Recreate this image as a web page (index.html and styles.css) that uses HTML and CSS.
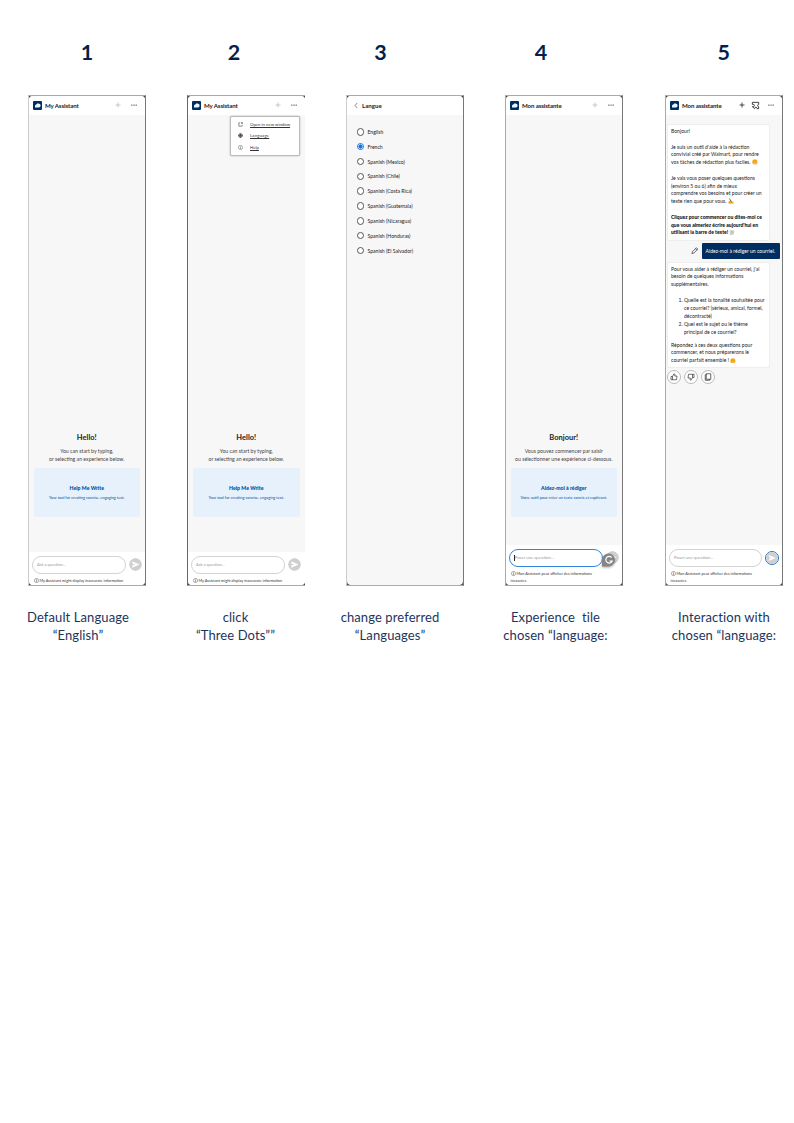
FILE: index.html
```html
<!DOCTYPE html>
<html lang="en">
<head>
<meta charset="utf-8">
<title>My Assistant language flow</title>
<link rel="stylesheet" href="styles.css">
</head>
<body>
<svg class="defs" aria-hidden="true">
  <symbol id="logo" viewBox="0 0 18 18"><rect width="18" height="18" rx="2" fill="#002e60"/><path d="M4 13V10a3 3 0 0 1 2.500-3A3.500 3.500 0 0 1 12 5.500a3.300 3.300 0 0 1 3 4.500c-.2 2-1.500 2.800-3 2.800H7z" fill="#e9f4ff"/></symbol>
  <symbol id="plus" viewBox="0 0 12 12"><path d="M6 1v10M1 6h10" fill="none" stroke="currentColor" stroke-width="1.600"/></symbol>
  <symbol id="dots" viewBox="0 0 12 4"><g fill="#222"><circle cx="1.700" cy="2" r="1.250"/><circle cx="6" cy="2" r="1.250"/><circle cx="10.300" cy="2" r="1.250"/></g></symbol>
  <symbol id="send" viewBox="0 0 26 26"><circle cx="13" cy="13" r="13" fill="#cfcfcf"/><path d="M6 6.500 21 13 6 19.500l1.500-5.300L14 13l-6.500-1.200z" fill="#fff"/></symbol>
  <symbol id="info" viewBox="0 0 12 12"><circle cx="6" cy="6" r="5" fill="none" stroke="#333" stroke-width="1"/><path d="M6 2.800v1.300M6 5.200v4" stroke="#333" stroke-width="1.200"/></symbol>
  <symbol id="puzzle" viewBox="0 0 20 20"><path d="M3 3h14v4.500a2.800 2.800 0 0 0 0 5.500v4h-3.500c0-4-5.500-4-5.500 0L3 12.500h2a2.500 2.500 0 0 0 0-5H3z" fill="none" stroke="#222" stroke-width="1.900" stroke-linejoin="round"/></symbol>
  <symbol id="pencil" viewBox="0 0 16 16"><path d="M2 14l1-4 8.500-8.500 3 3L6 13zM9.500 3.500l3 3" fill="none" stroke="#333" stroke-width="1.500" stroke-linejoin="round"/></symbol>
  <symbol id="thumb" viewBox="0 0 16 16"><path d="M2 7h3l3-5.500c2 0 2 2 1.300 4.500H14l-1 7.500H2zM5 7v6.500" fill="none" stroke="#333" stroke-width="1.400" stroke-linejoin="round"/></symbol>
  <symbol id="copy" viewBox="0 0 16 16"><path d="M4.500 1.500h9v11h-9zM4.500 3.500h-2v11h9v-2" fill="none" stroke="#333" stroke-width="1.500" stroke-linejoin="round"/></symbol>
  <symbol id="smile" viewBox="0 0 12 12"><circle cx="6" cy="6" r="5.500" fill="#fcb21c"/><path d="M3 4.300h2M7 4.300h2" stroke="#a85616" stroke-width="1"/><path d="M3 7h6c-.5 3-5.500 3-6 0z" fill="#fff1cf" stroke="#d8711d" stroke-width=".7"/></symbol>
  <symbol id="writing" viewBox="0 0 12 12"><path d="M1 8l4-4 4 3 3 2v2H1z" fill="#f8b01c"/><path d="M3 1l4 7" stroke="#424955" stroke-width="1.500"/><path d="M1 11h10" stroke="#7b674c" stroke-width="1"/></symbol>
  <symbol id="memo" viewBox="0 0 12 12"><path d="M2 1h7v10H2z" fill="#dce3e5" stroke="#a9b5b8" stroke-width=".7"/><path d="M3.500 3h4M3.500 5h3" stroke="#89979c"/><path d="M5 9l5.500-6" stroke="#dfa431" stroke-width="1.800"/></symbol>
</svg>

<main class="board">
  <div class="steps"><b>1</b><b>2</b><b>3</b><b>4</b><b>5</b></div>

  <div class="phones">
    <section class="phone"><div class="screen">
      <header class="bar"><svg class="logo"><use href="#logo"/></svg><span class="title">My Assistant</span><svg class="plus muted"><use href="#plus"/></svg><svg class="dots"><use href="#dots"/></svg></header>
      <div class="hero">
        <h2>Hello!</h2>
        <p class="lead"><span>You can start by typing,</span><span>or selecting an experience below.</span></p>
        <div class="tile"><strong>Help Me Write</strong><span>Your tool for creating concise, engaging text.</span></div>
      </div>
      <footer class="ask"><div class="entry"><span class="input">Ask a question...</span><svg class="send"><use href="#send"/></svg></div>
        <div class="note"><svg><use href="#info"/></svg>My Assistant might display inaccurate information</div></footer>
    </div></section>

    <section class="phone open"><div class="screen">
      <header class="bar"><svg class="logo"><use href="#logo"/></svg><span class="title">My Assistant</span><svg class="plus muted"><use href="#plus"/></svg><svg class="dots"><use href="#dots"/></svg></header>
      <nav class="menu">
        <a><svg viewBox="0 0 12 12"><path d="M5 2H2v8h8V7M7 1.500h3.500V5M10 2L8 4" fill="none" stroke="#333" stroke-width="1.300"/></svg><u>Open in new window</u></a>
        <a><svg viewBox="0 0 12 12"><circle cx="6" cy="6" r="4.500" fill="#bbb" stroke="#222" stroke-width="1.500"/><path d="M1.500 6h9M6 1.500v9" stroke="#222" stroke-width="1.300"/></svg><u class="wide">Language</u></a>
        <a><svg><use href="#info"/></svg><u>Help</u></a>
      </nav>
      <div class="hero">
        <h2>Hello!</h2>
        <p class="lead"><span>You can start by typing,</span><span>or selecting an experience below.</span></p>
        <div class="tile"><strong>Help Me Write</strong><span>Your tool for creating concise, engaging text.</span></div>
      </div>
      <footer class="ask"><div class="entry"><span class="input">Ask a question...</span><svg class="send"><use href="#send"/></svg></div>
        <div class="note"><svg><use href="#info"/></svg>My Assistant might display inaccurate information</div></footer>
    </div></section>

    <section class="phone"><div class="screen">
      <header class="bar back"><svg class="chev" viewBox="0 0 8 12"><path d="M6.500 1 2 6l4.500 5" fill="none" stroke="#444" stroke-width="1.300"/></svg><span class="title">Langue</span></header>
      <ul class="langs">
        <li><i></i>English</li><li><i class="on"></i>French</li><li><i></i>Spanish (Mexico)</li><li><i></i>Spanish (Chile)</li><li><i></i>Spanish (Costa Rica)</li><li><i></i>Spanish (Guatemala)</li><li><i></i>Spanish (Nicaragua)</li><li><i></i>Spanish (Honduras)</li><li><i></i>Spanish (El Salvador)</li>
      </ul>
    </div></section>

    <section class="phone"><div class="screen">
      <header class="bar"><svg class="logo"><use href="#logo"/></svg><span class="title">Mon assistante</span><svg class="plus muted"><use href="#plus"/></svg><svg class="dots"><use href="#dots"/></svg></header>
      <div class="hero fr">
        <h2>Bonjour!</h2>
        <p class="lead"><span>Vous pouvez commencer par saisir</span><span>ou sélectionner une expérience ci-dessous.</span></p>
        <div class="tile"><strong>Aidez-moi à rédiger</strong><span>Votre outil pour créer un texte concis et captivant.</span></div>
      </div>
      <footer class="ask tall"><div class="entry"><span class="input focus">Poser une question...</span><svg class="send"><use href="#send"/></svg>
          <svg class="grammar" viewBox="0 0 26 26"><path d="M0 25V12A12 12 0 1 1 13 25z" fill="#858585"/><path d="M18 8.500a6.200 6.200 0 1 0 1 6.500h-5" fill="none" stroke="#fff" stroke-width="2.200"/></svg></div>
        <div class="note"><svg><use href="#info"/></svg>Mon Assistant peut afficher des informations<br>inexactes</div></footer>
    </div></section>

    <section class="phone last"><div class="screen">
      <header class="bar"><svg class="logo"><use href="#logo"/></svg><span class="title">Mon assistante</span><svg class="plus"><use href="#plus"/></svg><svg class="puzzle"><use href="#puzzle"/></svg><svg class="dots"><use href="#dots"/></svg></header>
      <div class="chat">
        <article class="card">
          <p>Bonjour!</p>
          <p>Je suis un outil d'aide à la rédaction<br>convivial créé par Walmart, pour rendre<br>vos tâches de rédaction plus faciles. <svg><use href="#smile"/></svg></p>
          <p>Je vais vous poser quelques questions<br>(environ 5 ou 6) afin de mieux<br>comprendre vos besoins et pour créer un<br>texte rien que pour vous. <svg><use href="#writing"/></svg></p>
          <p class="strong">Cliquez pour commencer ou dites-moi ce<br>que vous aimeriez écrire aujourd'hui en<br>utilisant la barre de texte! <svg><use href="#memo"/></svg></p>
        </article>
        <div class="reply"><svg><use href="#pencil"/></svg><span>Aidez-moi à rédiger un courriel.</span></div>
        <article class="card second">
          <p>Pour vous aider à rédiger un courriel, j'ai<br>besoin de quelques informations<br>supplémentaires.</p>
          <ol><li>Quelle est la tonalité souhaitée pour<br>ce courriel? (sérieux, amical, formel,<br>décontracté)</li><li>Quel est le sujet ou le thème<br>principal de ce courriel?</li></ol>
          <p>Répondez à ces deux questions pour<br>commencer, et nous préparerons le<br>courriel parfait ensemble ! <svg><use href="#smile"/></svg></p>
        </article>
        <div class="actions"><span><svg><use href="#thumb"/></svg></span><span><svg class="down"><use href="#thumb"/></svg></span><span><svg><use href="#copy"/></svg></span></div>
      </div>
      <footer class="ask tall"><div class="entry"><span class="input">Poser une question...</span><svg class="send ring"><use href="#send"/></svg></div>
        <div class="note"><svg><use href="#info"/></svg>Mon Assistant peut afficher des informations<br>inexactes</div></footer>
    </div></section>
  </div>

  <div class="captions">
    <p>Default Language<br>“English”</p><p>click<br>“Three Dots””</p><p>change preferred<br>“Languages”</p><p>Experience&nbsp; tile<br>chosen “language:</p><p>Interaction with<br>chosen “language:</p>
  </div>
</main>
</body>
</html>
```
FILE: styles.css
```css
* { box-sizing: border-box; }
body { margin: 0; background: #fff; color: #222; font-family: Lato, "Open Sans", sans-serif; }
h2, p, ul, ol { margin: 0; padding: 0; }
svg { display: block; flex: none; }
.defs { position: absolute; width: 0; height: 0; }
.board { width: 794px; height: 1123px; padding-top: 37px; overflow: hidden; }

.steps { display: grid; grid-template-columns: 147px 147px 146px 175px 165.5px; padding-left: 13.5px; height: 58px; }
.steps b { text-align: center; font-size: 21.5px; line-height: 31px; color: #041f4c; }
.steps b:last-child { padding-left: 25px; }

.phones { display: grid; grid-template-columns: repeat(5, 118px); column-gap: 41px; padding-left: 28px; height: 491px; }
.phone { position: relative; height: 491px; background: #444; border: 1px solid #aaa; border-right: 1.5px solid #777; }
.phone:nth-child(1), .phone:nth-child(3) { border-left-color: #ccc; }
.phone.open { border-left: 1.5px solid #666; border-right: 0; }
.phone.last { margin-left: 1px; width: 118px; }
.screen { height: 100%; background: #f7f7f7; border-radius: 4px; overflow: hidden; display: flex; flex-direction: column; }
.bar { height: 19px; flex: none; background: #fff; display: flex; align-items: center; padding: 0 8px .5px 4px; }
.logo { width: 9px; height: 9px; margin-right: 3px; }
.title { font-size: 6.1px; font-weight: 700; flex: 1; white-space: nowrap; letter-spacing: -.1px; }
.plus { width: 6px; height: 6px; color: #222; margin-right: 10px; }
.plus.muted { color: #bbb; }
.dots { width: 6px; height: 2px; }
.puzzle { width: 9px; height: 9px; margin-left: -4px; margin-right: 8px; }
.bar.back { padding-left: 7px; }
.bar.back .title { letter-spacing: .05px; }
.chev { width: 4px; height: 7px; margin-right: 4px; }

.hero { margin-top: auto; padding: 0 5.5px 35.5px 5px; text-align: center; white-space: nowrap; }
.hero.fr { padding-bottom: 28.5px; }
.hero h2 { font-size: 7.5px; line-height: 10px; margin-bottom: 4px; }
.lead { font-size: 5.2px; line-height: 8px; color: #444; margin-bottom: 5px; }
.lead span { display: block; }
.tile { height: 49px; background: #e6f1fc; border-radius: 2px; display: flex; flex-direction: column; align-items: center; padding-top: 15px; color: #004f9a; }
.tile strong { font-size: 5.2px; line-height: 10px; font-weight: 900; }
.tile span { font-size: 3.9px; line-height: 10px; }
.fr .tile span { font-size: 3.95px; }

.ask { height: 33px; flex: none; background: #fff; padding: 4px 3px 0; white-space: nowrap; }
.ask.tall { height: 40px; }
.entry { position: relative; display: flex; align-items: center; gap: 3px; }
.input { width: 94px; height: 17.5px; border: 1px solid #d3d3d3; border-radius: 9px; padding-left: 4px; font-size: 4px; line-height: 15.5px; color: #999; }
.tall .input { font-size: 4.3px; }
.input.focus { border-color: #3184dc; }
.input.focus::before { content: ""; display: inline-block; width: .7px; height: 6px; background: #222; vertical-align: middle; }
.send { width: 13px; height: 13px; border-radius: 50%; }
.send.ring { width: 14px; height: 14px; border: 1px solid #2670c5; }
.grammar { position: absolute; left: 93px; top: 4px; width: 14px; height: 14px; filter: drop-shadow(0 1px 1px #0005); }
.note { font-size: 3.85px; line-height: 7px; margin-top: 3px; padding-left: 1.5px; color: #333; }
.note svg { display: inline-block; width: 5px; height: 5px; vertical-align: -1px; margin-right: 1px; }

.menu { position: absolute; left: 42px; top: 20px; width: 70px; height: 40px; background: #fff; border: 1px solid #bcbcbc; border-radius: 2px; box-shadow: 0 0 1.5px #0006; padding: 2px 7px; }
.menu a { display: flex; align-items: center; gap: 7px; height: 11.3px; font-size: 4.3px; white-space: nowrap; color: #333; }
.menu .wide { letter-spacing: .15px; }
.menu svg { width: 5px; height: 5px; }

.langs { list-style: none; padding: 9.5px 0 0 9.5px; }
.langs li { height: 14.83px; display: flex; align-items: center; gap: 3.5px; font-size: 5.1px; white-space: nowrap; }
.langs i { width: 7.5px; height: 7.5px; border: 1px solid #555; border-radius: 50%; background: #fff; }
.langs i.on { border-color: #1672d4; background: radial-gradient(circle, #1672d4 0 1.900px, #fff 2.200px); }

.chat { flex: 1; padding: 9px 2px 0 1px; white-space: nowrap; font-size: 5.08px; line-height: 7.8px; color: #222; }
.card { width: 103px; height: 117px; background: #fff; border: .5px solid #eee; border-radius: 2px; padding: 3px 3px; }
.card p + p, .card ol + p, .card p + ol { margin-top: 7.8px; }
.card p svg { display: inline-block; width: 5.8px; height: 5.8px; vertical-align: -1px; }
.card .strong { font-weight: 900; color: #111; font-size: 5px; }
.card.second { height: 106px; line-height: 7.9px; }
.card ol { padding-left: 13px; }
.card.second ol + p { margin-top: 5px; }
.reply { display: flex; align-items: center; justify-content: flex-end; gap: 3px; height: 16px; margin: 2px 0 2.5px; }
.reply svg { width: 7.5px; height: 7.5px; }
.reply span { width: 78.5px; height: 16px; background: #002e60; color: #fff; border-radius: 1px; padding-left: 4px; line-height: 16px; }
.actions { display: flex; gap: 3px; padding-top: 2.3px; }
.actions span { width: 14px; height: 14px; border: .8px solid #bbb; border-radius: 50%; background: #fff; display: grid; place-items: center; }
.actions svg { width: 8px; height: 8px; }
.down { transform: rotate(180deg); }

.captions { display: grid; grid-template-columns: 156px 159px 150px 181px 148px; padding-top: 22px; }
.captions p { text-align: center; font-size: 13px; line-height: 18px; color: #1c355e; letter-spacing: .1px; }
.captions p:last-child { padding-left: 8px; }
```
